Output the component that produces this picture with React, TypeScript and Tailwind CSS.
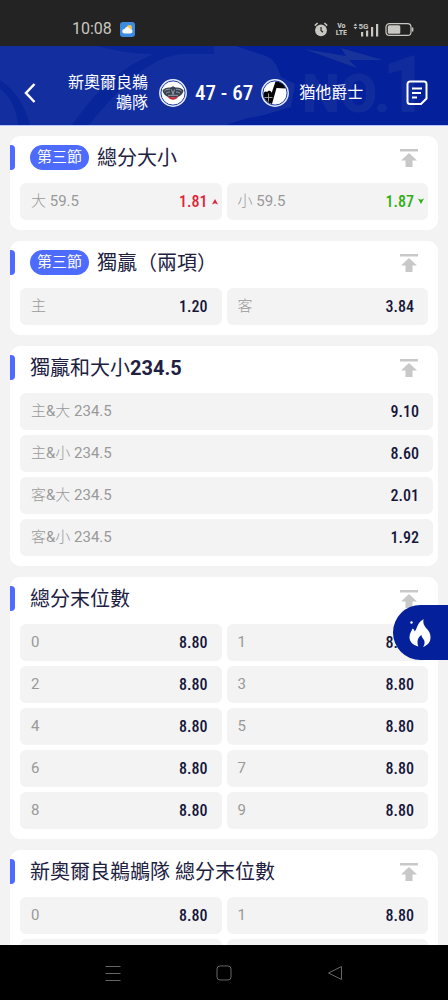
import React from "react";

type Trend = "up" | "down";
type Odd = { label: string; value: string; trend?: Trend };
type Market = {
  title: React.ReactNode;
  period?: string;
  columns: 1 | 2;
  odds: Odd[];
};

const digitOdds: Odd[] = Array.from({ length: 10 }, (_, i) => ({
  label: String(i),
  value: "8.80",
}));

const markets: Market[] = [
  {
    title: "總分大小",
    period: "第三節",
    columns: 2,
    odds: [
      { label: "大 59.5", value: "1.81", trend: "up" },
      { label: "小 59.5", value: "1.87", trend: "down" },
    ],
  },
  {
    title: "獨贏（兩項）",
    period: "第三節",
    columns: 2,
    odds: [
      { label: "主", value: "1.20" },
      { label: "客", value: "3.84" },
    ],
  },
  {
    title: (
      <>
        獨贏和大小<span className="font-bold">234.5</span>
      </>
    ),
    columns: 1,
    odds: [
      { label: "主&大 234.5", value: "9.10" },
      { label: "主&小 234.5", value: "8.60" },
      { label: "客&大 234.5", value: "2.01" },
      { label: "客&小 234.5", value: "1.92" },
    ],
  },
  { title: "總分末位數", columns: 2, odds: digitOdds },
  { title: "新奧爾良鵜鶘隊 總分末位數", columns: 2, odds: digitOdds },
];

const StatusBar = () => (
  <div className="flex h-[46px] shrink-0 items-center bg-[#232323] pt-3 pr-[34px] pl-[72px] text-[#c9c7c2]">
    <span className="text-base">10:08</span>
    <svg className="ml-2 h-[15px] w-[15px]" viewBox="0 0 15 15">
      <rect width="15" height="15" rx="3" fill="#3b8be0" />
      <circle cx="9.3" cy="5.8" r="2.7" fill="#f7c948" />
      <path d="M4.5 11.5a2.3 2.3 0 0 1 0-4.6 3 3 0 0 1 5.5 0 2.3 2.3 0 0 1 .5 4.6z" fill="#f4f8fd" />
    </svg>
    <div className="ml-auto flex items-center">
      {/* Alarm */}
      <svg className="h-[15px] w-[14px]" viewBox="0 0 14 15" fill="none">
        <circle cx="7" cy="8.3" r="5.9" fill="currentColor" />
        <path d="M7 5v3.5l2 1.7" stroke="#232323" strokeWidth="1.2" />
        <path d="M.8 3.6 3.6 1M13.2 3.6 10.4 1" stroke="currentColor" strokeWidth="1.5" />
      </svg>
      <span className="ml-2 text-center font-['Roboto_Condensed',Roboto,sans-serif] text-[8px] leading-[7px] font-bold">
        Vo
        <br />
        LTE
      </span>
      {/* Signal */}
      <svg className="ml-1.5 h-[15px] w-[26px]" viewBox="0 0 26 15" fill="currentColor">
        <path d="M.5 3.8 2.4 1.5l1.9 2.3zM.5 5 2.4 7.3 4.3 5z" />
        <text x="5.5" y="7" fontSize="8" fontWeight="700">
          5G
        </text>
        <path d="M8 10h2.2v4.5H8zM13 8.5h2.2v6H13zM18 5h2.2v9.5H18zM23 2h2.2v12.5H23z" />
      </svg>
      {/* Battery */}
      <svg className="ml-1.5 h-[15px] w-[29px]" viewBox="0 0 29 15" fill="none">
        <rect x="1" y="1.6" width="25" height="11.8" rx="3.5" stroke="currentColor" strokeWidth="1.2" />
        <rect x="2.8" y="3.3" width="12.5" height="8.4" rx="1.5" fill="currentColor" />
        <path d="M27.6 5.5v4" stroke="currentColor" strokeWidth="1.5" />
      </svg>
    </div>
  </div>
);

const PelicansLogo = () => (
  <svg className="h-7 w-7 shrink-0" viewBox="0 0 28 28">
    <circle cx="14" cy="14" r="13.2" fill="#fff" stroke="#e6ebfa" strokeWidth="1.4" />
    <circle cx="14" cy="14" r="12.1" fill="none" stroke="#1b36a8" strokeWidth="1" />
    <path d="M3.5 11.5C5 9.4 8 8.2 11.5 8.6L14 7.3l2.5 1.3c3.5-.4 6.5.8 8 2.9-.4 3.3-3 5.8-6.5 6.7h-8c-3.5-.9-6.1-3.4-6.5-6.7z" fill="#39424f" />
    <path d="M5.5 12c1.5-1.5 3.5-2 5.5-1.6M22.5 12c-1.5-1.5-3.5-2-5.5-1.6M7 14.4c1.3-1.2 2.5-1.6 4-1.3M21 14.4c-1.3-1.2-2.5-1.6-4-1.3M12.5 10.5l1.5 5 1.5-5M9 16.3h10" fill="none" stroke="#a3acb8" strokeWidth=".9" />
    <path d="M8.8 17.2c3.2 1.3 7.2 1.3 10.4 0-.6 2.2-2.6 3.6-5.2 3.6s-4.6-1.4-5.2-3.6z" fill="#c22f3e" />
  </svg>
);

const JazzLogo = () => (
  <svg className="h-7 w-7 shrink-0" viewBox="0 0 28 28">
    <circle cx="14" cy="14" r="13.2" fill="#fff" stroke="#e6ebfa" strokeWidth="1.4" />
    <path d="M14.5 2.5c5 0 8.5 2.5 10.5 7L15.5 9 11 25c-2-.4-3.3-1-4.5-2.2-2-1.5-3.5-3.8-4-6.3-.2-1.5 0-3 1.2-3.7 1-.6 2-.2 2.5.4.5-1.2 1.800-1.600 2.800-1.200 1 .3 1.500 1 1.700 1.800z" fill="#050505" />
    <path d="M3.5 18.5h8M7.5 14.5v8" stroke="#b9b9b9" strokeWidth=".8" />
    <circle cx="14" cy="14" r="12.1" fill="none" stroke="#1b36a8" strokeWidth="1" />
  </svg>
);

const HeaderArt = () => (
  <svg
    className="absolute inset-0 h-full w-full"
    viewBox="0 0 448 79"
    preserveAspectRatio="none"
    aria-hidden="true"
  >
    <path d="M0 0h236l30 10c10 4 12 13 15 21l14 7-4 23-27 8-16 3-22 7H0z" fill="#132f9f" />
    <path d="M97 0h117v8h-27c-36 0-65 31-98 71H72c25-35 47-57 82-71-20 0-38-3-57-8z" fill="#08259a" />
    <path d="M0 34c15 10 25 25 30 45H18C16 62 10 50 0 43z" fill="#08259a" />
    <path d="m304 3 42 7-5-8 42 12-34 0 8 8z" fill="#183399" />
    <g fill="#102b9c" fontFamily="Roboto" fontWeight="900">
      <text x="302" y="66" fontSize="54">
        NO.
      </text>
      <text x="382" y="66" fontSize="80">
        1
      </text>
    </g>
  </svg>
);

const MatchHeader = () => (
  <header className="relative h-20 shrink-0 border-b border-[#b5c3ff] bg-[#04209b] text-white">
    <HeaderArt />
    <div className="relative flex h-full items-center pt-3.5 pr-5 pl-[22px]">
      <button aria-label="返回" className="h-6 w-4">
        <svg className="h-6 w-4" viewBox="0 0 16 24" fill="none" stroke="currentColor" strokeWidth="2.5">
          <path d="m12.5 3-8.5 9 8.5 9" />
        </svg>
      </button>
      <div className="mr-auto ml-[30px] flex items-center">
        <span className="w-20 text-right text-base leading-5">新奧爾良鵜鶘隊</span>
        <div className="ml-[11px] flex items-center gap-2">
          <PelicansLogo />
          <span className="font-['Roboto_Condensed',Roboto,sans-serif] text-[21px] leading-7 font-medium whitespace-nowrap">
            47 - 67
          </span>
          <JazzLogo />
        </div>
        <span className="ml-2.5 text-base leading-5 whitespace-nowrap">猶他爵士</span>
      </div>
      <button aria-label="注單" className="h-[26px] w-[22px]">
        <svg className="h-[26px] w-[22px]" viewBox="0 0 22 26" fill="none" stroke="currentColor" strokeWidth="2">
          <path d="M4 1.5h14a2.5 2.5 0 0 1 2.5 2.5v14.5L15 24H4a2.5 2.5 0 0 1-2.5-2.5V4A2.5 2.5 0 0 1 4 1.5z" />
          <path d="M6 8.5h10M6 13h9M6 17.5h5" />
        </svg>
      </button>
    </div>
  </header>
);

const OddButton = ({ label, value, trend }: Odd) => {
  const color =
    trend === "up" ? "text-[#e02438]" : trend === "down" ? "text-[#2fae12]" : "text-[#15163a]";
  return (
    <button className="relative flex h-[37px] items-center justify-between rounded-md bg-[#f3f3f3] pr-3.5 pl-[11px]">
      <span className="font-[Roboto,'Noto_Sans_CJK_SC_Light','Noto_Sans_CJK_SC',sans-serif] text-[15px] text-[#999]">
        {label}
      </span>
      <span
        className={`font-['Roboto_Condensed',Roboto,sans-serif] text-base leading-6 font-medium ${color}`}
      >
        {value}
      </span>
      {trend && (
        <svg
          className={`absolute right-1 h-[7px] w-1.5 ${color} ${trend === "down" ? "rotate-180" : ""}`}
          viewBox="0 0 7 8"
          fill="currentColor"
        >
          <path d="M3.5 1 7 7.5 3.5 6 0 7.5z" />
        </svg>
      )}
    </button>
  );
};

const MarketCard = ({ title, period, columns, odds }: Market) => (
  <section className="shrink-0 rounded-[10px] bg-white pb-2.5">
    <div className="flex h-[47px] items-center pr-5 pb-1">
      <span className="h-[25px] w-[5px] rounded-r bg-[#4e6bff]" />
      {period && (
        <span className="-mr-[7px] ml-[15px] rounded-full bg-[#4e6bff] px-[7px] text-[15px] leading-[25px] text-white">
          {period}
        </span>
      )}
      <h2 className="ml-[15px] text-xl leading-7 text-[#20203f]">{title}</h2>
      <button aria-label="置頂" className="ml-auto h-[18px] w-[18px] text-[#c8c8c8]">
        <svg className="h-[18px] w-[18px]" viewBox="0 0 18 18" fill="currentColor">
          <path d="M0 0h18v2.5H0zM9 4l8 7.5h-4.5V18h-7v-6.5H1z" />
        </svg>
      </button>
    </div>
    <div
      className={
        columns === 1 ? "grid gap-[5px] pr-[5px] pl-2.5" : "grid grid-cols-2 gap-[5px] px-2.5"
      }
    >
      {odds.map((odd) => (
        <OddButton key={odd.label} {...odd} />
      ))}
    </div>
  </section>
);

const NavigationBar = () => (
  <nav className="flex h-[55px] shrink-0 items-center justify-center gap-[95px] bg-black text-[#666]">
    <button aria-label="最近">
      <svg className="h-4 w-4" viewBox="0 0 16 16" stroke="currentColor">
        <path d="M.5 1.5h15M.5 8.5h15M.5 15.5h15" />
      </svg>
    </button>
    <button aria-label="主畫面">
      <svg className="h-4 w-4" viewBox="0 0 16 16" fill="none" stroke="currentColor">
        <rect x="1" y="1" width="14" height="14" rx="3" />
      </svg>
    </button>
    <button aria-label="上一頁">
      <svg className="h-4 w-4" viewBox="0 0 16 16" fill="none" stroke="currentColor" strokeLinejoin="round">
        <path d="M14.5 1.5v13L1.5 8z" />
      </svg>
    </button>
  </nav>
);

const App = () => {
  return (
    <div className="relative flex h-screen flex-col bg-[#f3f3f3] font-[Roboto,'Noto_Sans_CJK_SC',sans-serif]">
      <StatusBar />
      <MatchHeader />
      <main className="flex min-h-0 flex-1 flex-col gap-[11px] overflow-y-auto px-2.5 pt-2.5 [scrollbar-width:none]">
        {markets.map((market, i) => (
          <MarketCard key={i} {...market} />
        ))}
      </main>
      <NavigationBar />

      {/* Floating hot bets button */}
      <button
        aria-label="熱門"
        className="absolute right-0 bottom-[340px] flex h-[55px] w-[55px] items-center rounded-l-full bg-[#04209b] pl-[15px] text-white"
      >
        <svg className="h-[30px] w-6" viewBox="0 0 24 30" fill="currentColor">
          <path d="M15.5 1c-.6 4 .3 6.500 3.500 10 2.500 2.800 3.500 5 3.500 8.500 0 4.500-2.500 7.500-7.500 9.500 1.500-2 2-4 1.200-6.500-.6-1.800-2.700-3-2.700-5.500-2.500 1.500-4 4-4 7 0 1.800.3 3.200.8 4.500C4.500 27 1.500 23.500 1.500 19c0-3.500 2-5.500 3-8.500 1.500.8 2 1.800 2.200 3C8.500 11.500 8.500 9 10.500 6c1.200-2 3-3.500 5-5z" />
          <circle cx="3.5" cy="4.500" r="1.200" />
        </svg>
      </button>
    </div>
  );
};

export default App;
